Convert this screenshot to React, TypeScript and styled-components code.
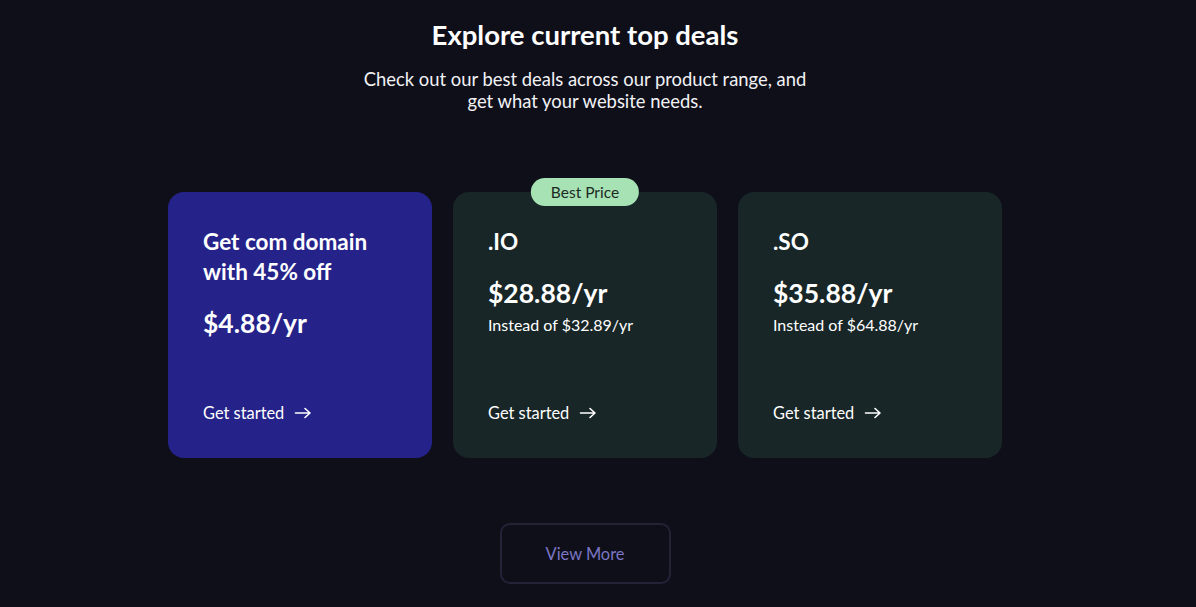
import React from "react";
import styled, { createGlobalStyle } from "styled-components";

const Global = createGlobalStyle`
  html, body { margin: 0; padding: 0; background: #0f0f1a; }
  body { font-family: "Lato", "Noto Sans", sans-serif; color: #fff; }
  * { box-sizing: border-box; }
`;

const Page = styled.main`
  width: 1170px;
  min-height: 607px;
  display: flex;
  flex-direction: column;
  align-items: center;
  padding-top: 17px;
`;

const Title = styled.h2`
  margin: 0;
  font-size: 27.5px;
  font-weight: 700;
  line-height: 36px;
  color: #fff;
`;

const Subtitle = styled.p`
  margin: 15px 0 0;
  font-size: 18.4px;
  line-height: 22px;
  text-align: center;
  max-width: 470px;
  color: #f2f2f5;
`;

const Cards = styled.div`
  display: flex;
  gap: 21px;
  margin-top: 80px;
`;

const Card = styled.div<{ $primary?: boolean }>`
  position: relative;
  width: 264px;
  height: 266px;
  border-radius: 16px;
  background: ${(p) => (p.$primary ? "#25238a" : "#182628")};
  padding: 35px 35px 34px;
  display: flex;
  flex-direction: column;
`;

const Badge = styled.span`
  position: absolute;
  top: -14px;
  left: 50%;
  transform: translateX(-50%);
  height: 28px;
  padding: 0 20px;
  border-radius: 14px;
  background: #a6e2b4;
  color: #1d2a24;
  font-size: 15.5px;
  line-height: 28px;
  white-space: nowrap;
`;

const CardTitle = styled.h3`
  margin: 0;
  font-size: 22.5px;
  font-weight: 700;
  line-height: 30px;
`;

const Price = styled.div`
  margin-top: 19px;
  font-size: 26.5px;
  font-weight: 700;
  line-height: 34px;
`;

const Instead = styled.div`
  margin-top: 4px;
  font-size: 16px;
  line-height: 22px;
`;

const Action = styled.a`
  margin-top: auto;
  display: inline-flex;
  align-items: center;
  gap: 10px;
  font-size: 16.4px;
  line-height: 22px;
  color: #fff;
  text-decoration: none;
  cursor: pointer;
`;

const ViewMore = styled.button`
  margin-top: 65px;
  width: 171px;
  height: 61px;
  border: 2px solid #232338;
  border-radius: 10px;
  background: transparent;
  color: #7b76c4;
  font-family: inherit;
  font-size: 16.4px;
  cursor: pointer;
`;

const Arrow = () => (
  <svg width="18" height="14" viewBox="0 0 18 14" fill="none" stroke="#fff" strokeWidth="1.6" strokeLinecap="round" strokeLinejoin="round">
    <path d="M1.5 7h14.5M11 2.5 16 7l-5 4.5" />
  </svg>
);

const deals = [
  { title: "Get com domain with 45% off", price: "$4.88/yr", primary: true },
  { title: ".IO", price: "$28.88/yr", instead: "Instead of $32.89/yr", badge: "Best Price" },
  { title: ".SO", price: "$35.88/yr", instead: "Instead of $64.88/yr" },
];

export default function App() {
  return (
    <>
      <Global />
      <Page>
        <Title>Explore current top deals</Title>
        <Subtitle>Check out our best deals across our product range, and get what your website needs.</Subtitle>
        <Cards>
          {deals.map((d) => (
            <Card key={d.title} $primary={d.primary}>
              {d.badge && <Badge>{d.badge}</Badge>}
              <CardTitle>{d.title}</CardTitle>
              <Price>{d.price}</Price>
              {d.instead && <Instead>{d.instead}</Instead>}
              <Action>
                Get started <Arrow />
              </Action>
            </Card>
          ))}
        </Cards>
        <ViewMore>View More</ViewMore>
      </Page>
    </>
  );
}
